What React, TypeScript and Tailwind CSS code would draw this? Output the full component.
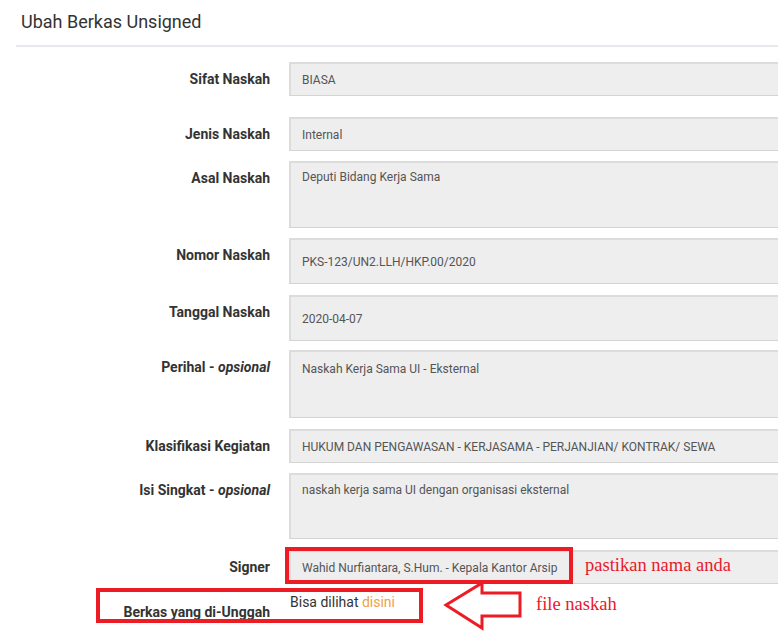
import React from "react"

type Row = {
  label: React.ReactNode
  value: string
  box: string
  text: string
  space: string
}

const rows: Row[] = [
  { label: "Sifat Naskah", value: "BIASA", box: "h-[34px] items-center", text: "", space: "mt-0" },
  { label: "Jenis Naskah", value: "Internal", box: "h-[34px] items-center", text: "", space: "mt-[21px]" },
  { label: "Asal Naskah", value: "Deputi Bidang Kerja Sama", box: "h-[67px] items-start", text: "pt-[5px]", space: "mt-[10px]" },
  { label: "Nomor Naskah", value: "PKS-123/UN2.LLH/HKP.00/2020", box: "h-[46px] items-center", text: "", space: "mt-[10px]" },
  { label: "Tanggal Naskah", value: "2020-04-07", box: "h-[46px] items-center", text: "", space: "mt-[11px]" },
  {
    label: (
      <>
        Perihal - <i>opsional</i>
      </>
    ),
    value: "Naskah Kerja Sama UI - Eksternal",
    box: "h-[68px] items-start",
    text: "pt-[8px]",
    space: "mt-[9px]",
  },
  {
    label: "Klasifikasi Kegiatan",
    value: "HUKUM DAN PENGAWASAN - KERJASAMA - PERJANJIAN/ KONTRAK/ SEWA",
    box: "h-[34px] items-center",
    text: "",
    space: "mt-[11px]",
  },
  {
    label: (
      <>
        Isi Singkat - <i>opsional</i>
      </>
    ),
    value: "naskah kerja sama UI dengan organisasi eksternal",
    box: "h-[66px] items-start",
    text: "pt-[6px]",
    space: "mt-[10px]",
  },
  { label: "Signer", value: "Wahid Nurfiantara, S.Hum. - Kepala Kantor Arsip", box: "h-[34px] items-center", text: "", space: "mt-[11px]" },
]

export default function App() {
  return (
    <div className="relative w-[778px] h-[639px] overflow-hidden bg-white font-['Roboto',sans-serif] text-[#333]">
      <div className="ml-[16px] h-[47px] pl-[5px] border-b-2 border-[#e6e9ee] flex items-center">
        <h1 className="text-[18px] font-normal text-[#333] pb-[2px]">Ubah Berkas Unsigned</h1>
      </div>

      <div className="pt-[15px] pl-[16px]">
        {rows.map((row, i) => (
          <div key={i} className={`flex ${row.space}`}>
            <label
              className={`w-[254px] shrink-0 text-right text-[14px] font-bold leading-[20px] ${
                row.box.includes("items-center") && !row.box.includes("46") ? "self-center" : "pt-[7px]"
              }`}
            >
              {row.label}
            </label>
            <div
              className={`ml-[19px] w-[500px] shrink-0 flex ${row.box} bg-[#eeeeee] border-2 border-[#dcdcdc] border-b border-b-[#d4d4d4] pl-[11px] text-[12px] text-[#555] whitespace-nowrap`}
            >
              <span className={row.text}>{row.value}</span>
            </div>
          </div>
        ))}

        <div className="flex mt-[5px]">
          <label className="w-[254px] shrink-0 text-right text-[14px] font-bold leading-[20px] pt-[13px]">
            Berkas yang di-Unggah
          </label>
          <div className="ml-[19px] text-[14px] leading-[20px] pt-[3px] pl-[1px]">
            Bisa dilihat <span className="text-[#f0a04b]">disini</span>
          </div>
        </div>
      </div>

      {/* annotations */}
      <div className="absolute left-[285px] top-[547px] w-[288px] h-[37px] border-[4px] border-[#ed1c24]" />
      <div className="absolute left-[96px] top-[588px] w-[327px] h-[35px] border-[4px] border-[#ed1c24]" />
      <svg className="absolute left-0 top-0" width="778" height="639">
        <polygon
          points="446,605 482,583 482,593 520,593 520,616 482,616 482,628"
          fill="white"
          stroke="#ed1c24"
          strokeWidth="3"
          strokeLinejoin="miter"
        />
      </svg>
      <div className="absolute left-[585px] top-[553px] font-['Liberation_Serif',serif] text-[18.5px] leading-[24px] text-[#e8192c]">
        pastikan nama anda
      </div>
      <div className="absolute left-[536px] top-[592px] font-['Liberation_Serif',serif] text-[18.5px] leading-[24px] text-[#e8192c]">
        file naskah
      </div>
    </div>
  )
}
